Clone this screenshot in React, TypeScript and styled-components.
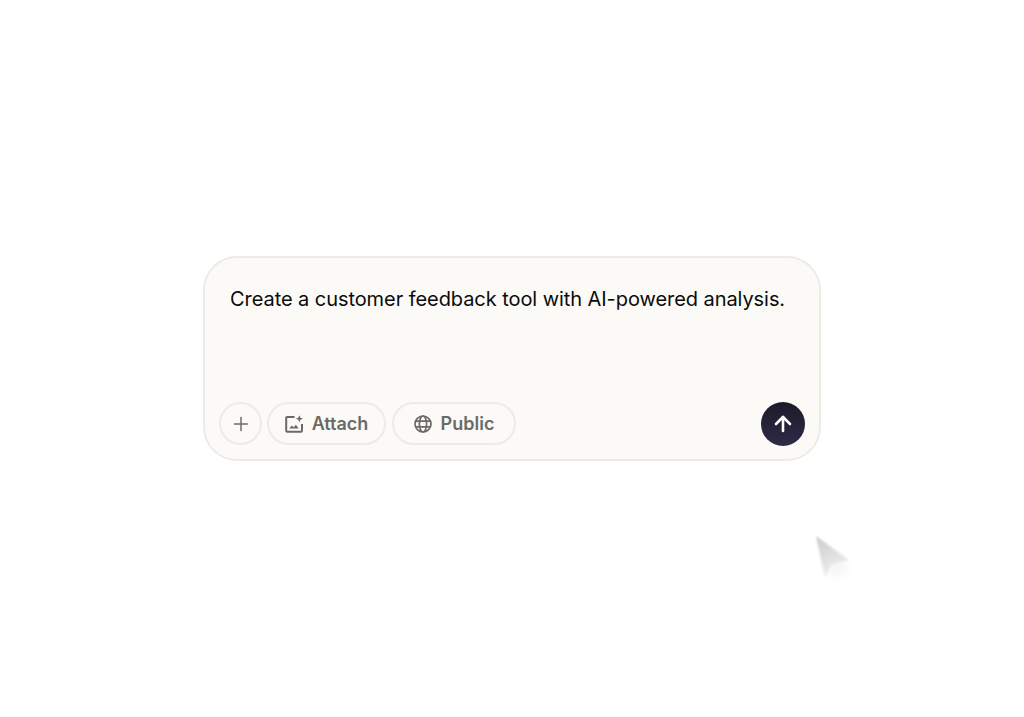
import { ArrowUp, Plus } from 'lucide-react'
import styled, { createGlobalStyle } from 'styled-components'

const GlobalStyle = createGlobalStyle`
  html, body {
    margin: 0;
    background: #ffffff;
  }
`
const Page = styled.div`
  position: relative;
  width: 1024px;
  height: 717px;
  overflow: hidden;
  padding-top: 256px;
  box-sizing: border-box;
  font-family: Inter, 'Liberation Sans', sans-serif;
`
const Composer = styled.div`
  box-sizing: border-box;
  width: 618px;
  height: 205px;
  margin: 0 auto;
  padding: 29px 14px 13px 14px;
  display: flex;
  flex-direction: column;
  justify-content: space-between;
  background: #fbfaf7;
  border: 2px solid #ecebe7;
  border-radius: 34px;
`
const Prompt = styled.div`
  padding-left: 11px;
  font-size: 20px;
  line-height: 24px;
  letter-spacing: -0.065px;
  white-space: nowrap;
  color: #0b0b0b;
`
const Toolbar = styled.div`
  display: flex;
  align-items: flex-start;
  gap: 6px;
  height: 44px;
`
const Pill = styled.button<{ $width: number }>`
  box-sizing: border-box;
  width: ${({ $width }) => $width}px;
  height: 43px;
  padding: 0;
  display: flex;
  align-items: center;
  justify-content: center;
  gap: 9px;
  background: transparent;
  border: 2px solid #ecebe7;
  border-radius: 22px;
  color: #6b6a67;
  font-family: inherit;
  font-size: 18px;
  font-weight: 600;
`
const PlusPill = styled(Pill)`
  margin-right: -1px;
`
const SendButton = styled.button`
  width: 44px;
  height: 44px;
  margin-left: auto;
  padding: 0;
  display: flex;
  align-items: center;
  justify-content: center;
  border: 0;
  border-radius: 50%;
  background: linear-gradient(180deg, #1c1a29 0%, #2f2a48 100%);
  color: #ffffff;
`
const Cursor = styled.svg`
  position: absolute;
  left: 806px;
  top: 528px;
  width: 60px;
  height: 70px;
`

function AttachIcon() {
  return (
    <svg width="18" height="18" viewBox="0 0 18 18" fill="none" stroke="currentColor" strokeWidth="2">
      <path d="M9.5 2H2.2a1 1 0 0 0-1 1v12.8a1 1 0 0 0 1 1H16a1 1 0 0 0 1-1V9" />
      <path d="M4.3 13.6l2.4-3 2 1.7 2.2-2.6 2.8 3.9z" fill="currentColor" stroke="none" />
      <path d="M14.4.2l1 2.6 2.6 1-2.6 1-1 2.6-1-2.6-2.6-1 2.6-1z" fill="currentColor" stroke="none" />
    </svg>
  )
}

function GlobeIcon() {
  return (
    <svg width="18" height="18" viewBox="0 0 18 18" fill="none" stroke="currentColor" strokeWidth="1.7">
      <circle cx="9" cy="9" r="8" />
      <ellipse cx="9" cy="9" rx="3.6" ry="8" />
      <path d="M1.8 6.2h14.4M1.8 11.8h14.4" />
    </svg>
  )
}

export default function App() {
  return (
    <Page>
      <GlobalStyle />
      <Composer>
        <Prompt>Create a customer feedback tool with AI-powered analysis.</Prompt>
        <Toolbar>
          <PlusPill $width={43}>
            <Plus size={22} strokeWidth={1.6} />
          </PlusPill>
          <Pill $width={119}>
            <AttachIcon />
            Attach
          </Pill>
          <Pill $width={124}>
            <GlobeIcon />
            Public
          </Pill>
          <SendButton>
            <ArrowUp size={24} strokeWidth={2.6} />
          </SendButton>
        </Toolbar>
      </Composer>
      <Cursor viewBox="0 0 60 70">
        <defs>
          <filter id="cursor-blur" x="-50%" y="-50%" width="200%" height="200%">
            <feGaussianBlur stdDeviation="1.3" />
          </filter>
          <filter id="cursor-shadow" x="-50%" y="-50%" width="200%" height="200%">
            <feGaussianBlur stdDeviation="6" />
          </filter>
          <linearGradient id="cursor-fill" x1="0.2" y1="0" x2="0.6" y2="1">
            <stop offset="0" stopColor="#cdcdcd" />
            <stop offset="1" stopColor="#f3f3f3" />
          </linearGradient>
        </defs>
        <path d="M16 20L44 40L28 50Z" fill="#000000" opacity="0.05" filter="url(#cursor-shadow)" />
        <path d="M10 8L43 32L26 36L19 50Z" fill="url(#cursor-fill)" filter="url(#cursor-blur)" />
      </Cursor>
    </Page>
  )
}
